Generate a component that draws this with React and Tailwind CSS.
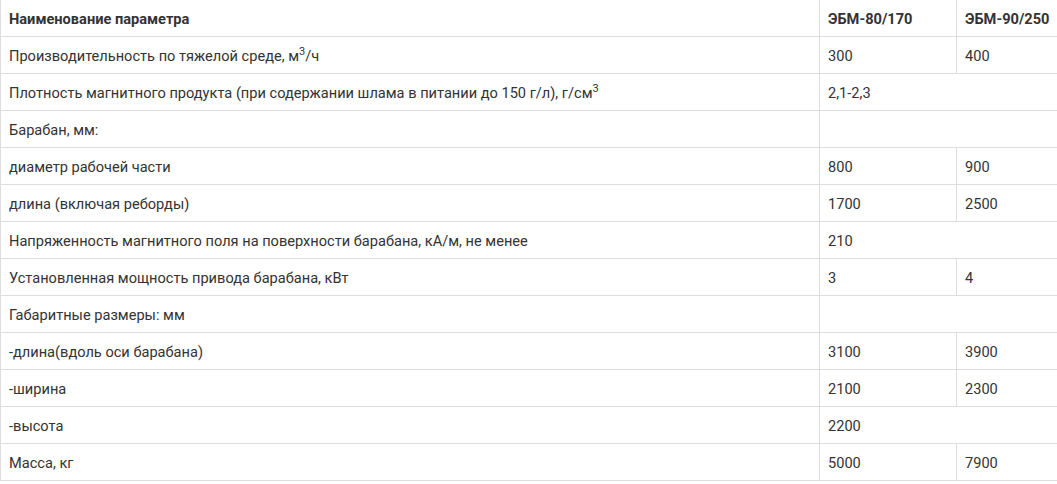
import React from "react";

const rows = [
  { name: "Производительность по тяжелой среде, м", sup: "3", after: "/ч", a: "300", b: "400" },
  { name: "Плотность магнитного продукта (при содержании шлама в питании до 150 г/л), г/см", sup: "3", span: "2,1-2,3" },
  { name: "Барабан, мм:", span: "" },
  { name: "диаметр рабочей части", a: "800", b: "900" },
  { name: "длина (включая реборды)", a: "1700", b: "2500" },
  { name: "Напряженность магнитного поля на поверхности барабана, кА/м, не менее", span: "210" },
  { name: "Установленная мощность привода барабана, кВт", a: "3", b: "4" },
  { name: "Габаритные размеры: мм", span: "" },
  { name: "-длина(вдоль оси барабана)", a: "3100", b: "3900" },
  { name: "-ширина", a: "2100", b: "2300" },
  { name: "-высота", span: "2200" },
  { name: "Масса, кг", a: "5000", b: "7900" },
];

const td = "h-[37px] px-2 pt-[2px] pb-0 border border-[#dddddd] align-middle";

export default function App() {
  return (
    <div className="w-[1057px] h-[484px] overflow-hidden bg-white" style={{ fontFamily: "Roboto, 'Noto Sans', sans-serif" }}>
      <table className="border-collapse text-[14.6px] text-[#333333] leading-[20px] table-fixed w-[1100px] -mt-px">
        <colgroup>
          <col className="w-[819px]" />
          <col className="w-[137px]" />
          <col className="w-[144px]" />
        </colgroup>
        <thead>
          <tr>
            <th className={`${td} text-left font-bold`}>Наименование параметра</th>
            <th className={`${td} text-left font-bold`}>ЭБМ-80/170</th>
            <th className={`${td} text-left font-bold`}>ЭБМ-90/250</th>
          </tr>
        </thead>
        <tbody>
          {rows.map((r, i) => (
            <tr key={i}>
              <td className={td}>
                {r.name}
                {r.sup && <sup className="text-[11px] -top-[6px]">{r.sup}</sup>}
                {r.after}
              </td>
              {r.span !== undefined ? (
                <td className={td} colSpan={2}>{r.span}</td>
              ) : (
                <>
                  <td className={td}>{r.a}</td>
                  <td className={td}>{r.b}</td>
                </>
              )}
            </tr>
          ))}
        </tbody>
      </table>
    </div>
  );
}
